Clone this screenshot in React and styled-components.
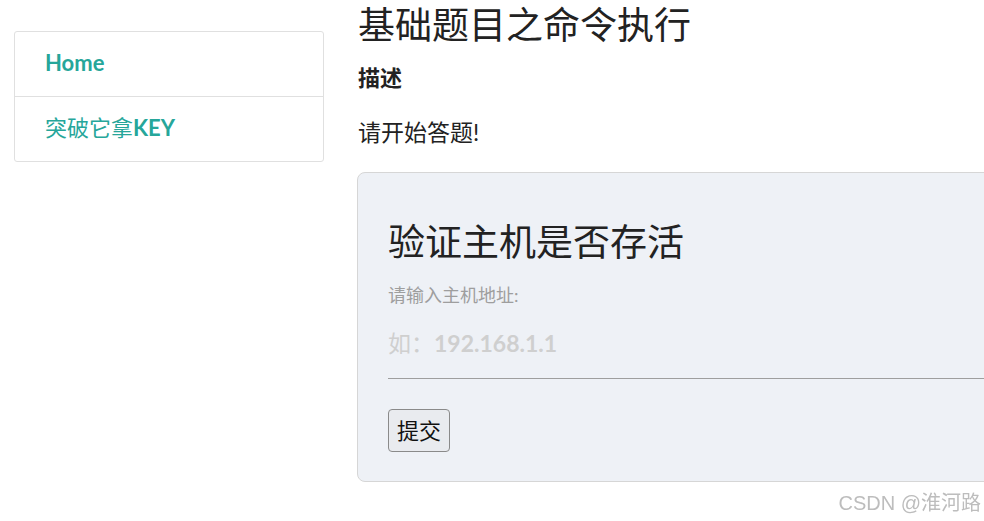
import React, { useState } from "react";
import styled, { createGlobalStyle } from "styled-components";

const GlobalStyle = createGlobalStyle`
  html, body {
    margin: 0;
    padding: 0;
    background: #fff;
    overflow: hidden;
  }
  body {
    font-family: "Lato", "Noto Sans CJK SC", sans-serif;
    color: #222;
  }
`;

function App() {
  const [host, setHost] = useState("");

  return (
    <>
      <GlobalStyle />
      <Page>
        <Sidebar>
          <NavItem>
            <b>Home</b>
          </NavItem>
          <NavItem>
            突破它拿<b>KEY</b>
          </NavItem>
        </Sidebar>
        <Main>
          <Title>基础题目之命令执行</Title>
          <SubTitle>描述</SubTitle>
          <Intro>请开始答题!</Intro>
          <Panel>
            <PanelTitle>验证主机是否存活</PanelTitle>
            <Label htmlFor="host">请输入主机地址:</Label>
            <InputWrap>
              <Input
                id="host"
                value={host}
                onChange={(e) => setHost(e.target.value)}
              />
              {host === "" && (
                <Hint>
                  如：<b>192.168.1.1</b>
                </Hint>
              )}
            </InputWrap>
            <SubmitButton>提交</SubmitButton>
          </Panel>
        </Main>
      </Page>
      <Watermark>CSDN @淮河路</Watermark>
    </>
  );
}

export default App;

const Page = styled.div`
  display: flex;
  align-items: flex-start;
  padding-left: 14px;
  width: 1400px;
  height: 521px;
`;

const Sidebar = styled.div`
  margin-top: 31px;
  width: 310px;
  flex-shrink: 0;
  border: 1px solid #e0e0e0;
  border-radius: 3px;
  box-sizing: border-box;
`;

const NavItem = styled.div`
  padding: 19px 30px 21px;
  font-size: 22px;
  line-height: 24px;
  color: #26a69a;
  & + & {
    border-top: 1px solid #e0e0e0;
  }
  & b {
    font-weight: 700;
  }
`;

const Main = styled.div`
  margin-left: 33px;
  width: 900px;
  display: flex;
  flex-direction: column;
  align-items: flex-start;
`;

const Title = styled.h1`
  margin: 5px 0 0;
  font-size: 37px;
  line-height: 40px;
  font-weight: 400;
  padding-left: 1px;
`;

const SubTitle = styled.h4`
  margin: 18px 0 0;
  padding-left: 1px;
  font-size: 22px;
  line-height: 30px;
  font-weight: 700;
`;

const Intro = styled.p`
  margin: 24px 0 0;
  padding-left: 1px;
  font-size: 23px;
  line-height: 30px;
`;

const Panel = styled.div`
  margin-top: 25px;
  align-self: stretch;
  background: #eef1f6;
  border: 1px solid #d6d6d6;
  border-radius: 8px;
  padding: 47px 30px 29px;
  display: flex;
  flex-direction: column;
  align-items: flex-start;
`;

const PanelTitle = styled.h2`
  margin: 0;
  font-size: 37px;
  line-height: 44px;
  font-weight: 400;
`;

const Label = styled.label`
  margin-top: 19px;
  font-size: 18px;
  line-height: 24px;
  color: #9e9e9e;
`;

const InputWrap = styled.div`
  position: relative;
  margin-top: 13px;
  align-self: stretch;
`;

const Input = styled.input`
  display: block;
  width: 100%;
  box-sizing: border-box;
  height: 59px;
  padding: 10px 0 22px;
  border: none;
  border-bottom: 1px solid #9e9e9e;
  background: transparent;
  font-family: "Lato", "Noto Sans CJK SC", sans-serif;
  font-size: 23px;
  line-height: 26px;
  outline: none;
`;

const Hint = styled.span`
  position: absolute;
  left: 0;
  top: 10px;
  font-size: 23px;
  line-height: 26px;
  color: #cfcfcf;
  pointer-events: none;
  & b {
    font-weight: 700;
  }
`;

const SubmitButton = styled.button`
  margin-top: 30px;
  height: 43px;
  padding: 0 8px 4px;
  font-family: "Noto Sans CJK SC", sans-serif;
  font-size: 22px;
  line-height: 30px;
  color: #111;
  background: #e9ebef;
  border: 1px solid #8a8a8a;
  border-radius: 4px;
`;

const Watermark = styled.div`
  position: fixed;
  right: 3px;
  bottom: 6px;
  font-family: "Liberation Sans", "Noto Sans CJK SC", sans-serif;
  font-size: 20px;
  line-height: 24px;
  color: #bdbdbd;
`;
